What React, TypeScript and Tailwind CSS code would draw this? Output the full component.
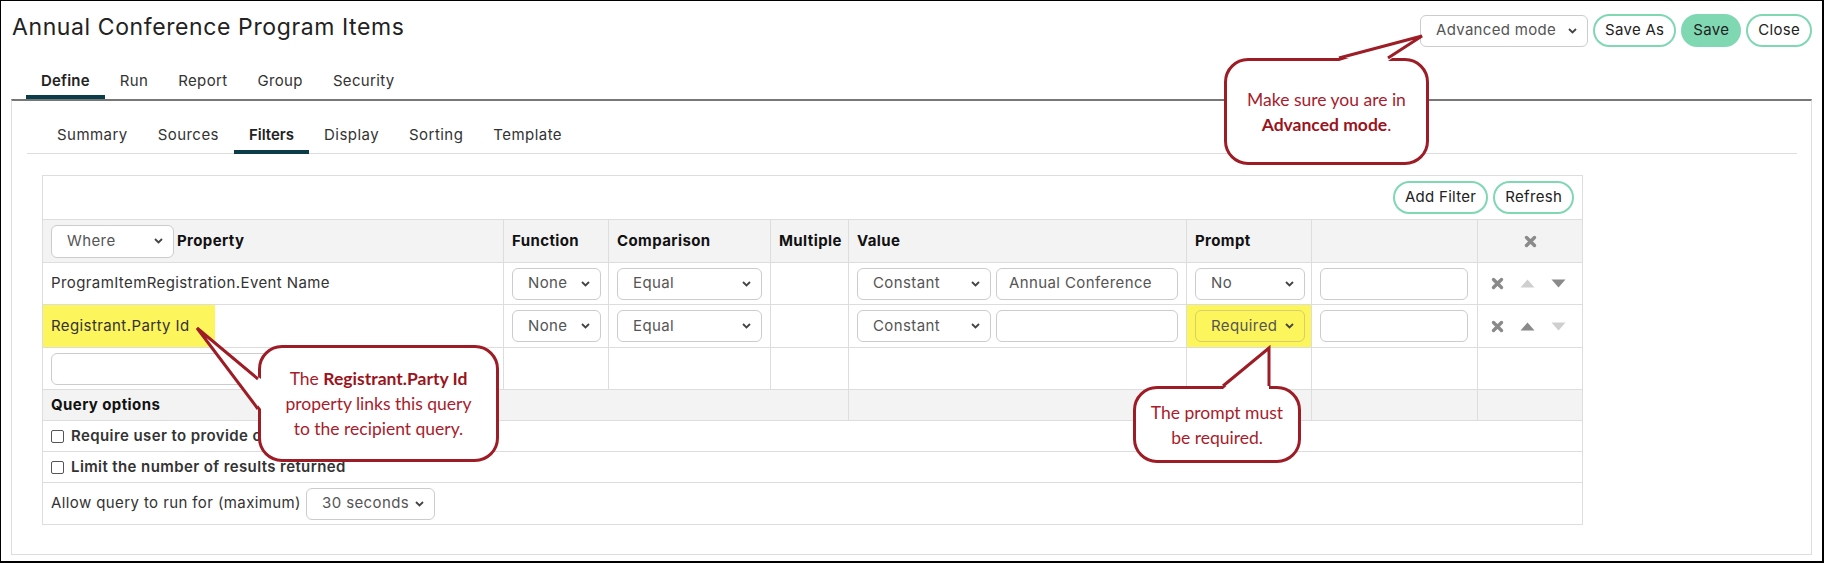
import type { ReactNode } from "react";

const mainTabs = ["Define", "Run", "Report", "Group", "Security"];
const subTabs = ["Summary", "Sources", "Filters", "Display", "Sorting", "Template"];

function Chevron() {
  return (
    <svg width="9" height="6" viewBox="0 0 9 6" className="shrink-0">
      <polyline points="1,1 4.5,4.5 8,1" fill="none" stroke="#444" strokeWidth="1.8" />
    </svg>
  );
}

function Select({ value, className }: { value: string; className: string }) {
  return (
    <div
      className={`flex items-center justify-between rounded-[6px] border border-[#ccc] pl-[15px] pr-[10px] text-[#555] ${className}`}
    >
      <span>{value}</span>
      <Chevron />
    </div>
  );
}

function Input({ value, className }: { value?: string; className: string }) {
  return (
    <div className={`flex items-center rounded-[6px] border border-[#ccc] bg-white pl-[12px] text-[#555] ${className}`}>
      {value}
    </div>
  );
}

function Pill({ label, filled }: { label: string; filled?: boolean }) {
  return (
    <button
      className={`h-[33px] rounded-full border-2 border-[#7fd8b2] px-[10px] text-[15px] tracking-[0.3px] text-[#222] ${
        filled ? "bg-[#7fd8b2]" : "bg-white"
      }`}
    >
      {label}
    </button>
  );
}

function RemoveIcon() {
  return (
    <svg width="13" height="13" viewBox="0 0 13 13">
      <path d="M2.5 2.5 L10.5 10.5 M10.5 2.5 L2.5 10.5" stroke="#8a8a8a" strokeWidth="3.4" strokeLinecap="round" />
    </svg>
  );
}

function Arrow({ up, active }: { up?: boolean; active?: boolean }) {
  return (
    <svg width="15" height="9" viewBox="0 0 15 9">
      <polygon points={up ? "7.5,0.5 14.5,8.5 0.5,8.5" : "0.5,0.5 14.5,0.5 7.5,8.5"} fill={active ? "#8a8a8a" : "#cfcfcf"} />
    </svg>
  );
}

function RowActions({ upActive, downActive }: { upActive?: boolean; downActive?: boolean }) {
  return (
    <div className="flex items-center gap-[16px] pl-[13px]">
      <RemoveIcon />
      <Arrow up active={upActive} />
      <Arrow active={downActive} />
    </div>
  );
}

function Checkbox() {
  return <span className="inline-block h-[13px] w-[13px] shrink-0 rounded-[2px] border border-[#555] bg-white" />;
}

type Pt = [number, number];

// speech bubble: rounded box plus a wedge pointing at the annotated control
function Bubble({
  x,
  y,
  w,
  h,
  base,
  tip,
  children,
}: {
  x: number;
  y: number;
  w: number;
  h: number;
  base: [Pt, Pt];
  tip: Pt;
  children: ReactNode;
}) {
  const left = Math.min(x, tip[0]) - 4;
  const top = Math.min(y, tip[1]) - 4;
  const sw = Math.max(x + w, tip[0]) - left + 4;
  const sh = Math.max(y + h, tip[1]) - top + 4;
  const [b1, b2] = base;
  const horizontal = b1[1] === b2[1];
  const inset = (p: Pt): Pt => (horizontal ? [p[0], p[1] + 3] : [p[0] + 3, p[1]]);
  const pts = (list: Pt[]) => list.map((p) => `${p[0] - left},${p[1] - top}`).join(" ");
  return (
    <>
      <div
        className="absolute flex items-center justify-center rounded-[24px] border-[3px] border-[#9d1c26] bg-white text-center font-['Lato',sans-serif] text-[17.5px] leading-[25px] text-[#a81c2c]"
        style={{ left: x, top: y, width: w, height: h }}
      >
        <div>{children}</div>
      </div>
      <svg className="pointer-events-none absolute" style={{ left, top }} width={sw} height={sh}>
        <polygon points={pts([inset(b1), tip, inset(b2)])} fill="white" />
        <polyline points={pts([b1, tip, b2])} fill="none" stroke="#9d1c26" strokeWidth="3" strokeLinejoin="miter" />
      </svg>
    </>
  );
}

const cell = "border border-[#ddd] px-[8px]";
const bare = "border border-[#ddd]";

export default function App() {
  return (
    <div className="relative flex h-[563px] w-[1824px] flex-col overflow-hidden border-t border-l border-r-2 border-b-2 border-black bg-white font-['Inter',sans-serif] text-[#222]">
      <header className="flex items-start justify-between pl-[11px] pr-[10px] pt-[13px]">
        <h1 className="-mt-[2px] text-[23px] leading-[30px] tracking-[0.6px] text-[#222]">
          Annual Conference Program Items
        </h1>
        <div className="flex items-center gap-[5px]">
          <Select value="Advanced mode" className="h-[32px] w-[168px] text-[15px] tracking-[0.3px]" />
          <Pill label="Save As" />
          <Pill label="Save" filled />
          <Pill label="Close" />
        </div>
      </header>

      <nav className="ml-[25px] mt-[24px] flex">
        {mainTabs.map((t) => (
          <div
            key={t}
            className={`border-b-4 px-[15px] pb-[4px] text-[15px] leading-[20px] ${
              t === "Define"
                ? "border-[#0b3c49] font-semibold tracking-[0.2px] text-[#222]"
                : "border-transparent tracking-[0.35px] text-[#333]"
            }`}
          >
            {t}
          </div>
        ))}
      </nav>

      <section className="mb-[6px] ml-[10px] mr-[10px] flex-1 border-x border-b border-t-2 border-[#ddd] border-t-[#777]">
        <div className="ml-[15px] mr-[14px] flex border-b border-[#ddd] pl-[15px]">
          {subTabs.map((t) => (
            <div
              key={t}
              className={`-mb-px border-b-4 px-[15px] pb-[5px] pt-[24px] text-[15px] leading-[20px] ${
                t === "Filters"
                  ? "border-[#0b3c49] font-semibold tracking-[0px] text-[#222]"
                  : "border-transparent tracking-[0.45px] text-[#333]"
              }`}
            >
              {t}
            </div>
          ))}
        </div>

        <table className="ml-[30px] mt-[21px] w-[1540px] table-fixed border-collapse text-[15px] tracking-[0.4px]">
          <colgroup>
            <col className="w-[461px]" />
            <col className="w-[105px]" />
            <col className="w-[162px]" />
            <col className="w-[78px]" />
            <col className="w-[338px]" />
            <col className="w-[125px]" />
            <col className="w-[166px]" />
            <col className="w-[105px]" />
          </colgroup>
          <tbody>
            <tr className="h-[44px]">
              <td colSpan={8} className={cell}>
                <div className="flex justify-end gap-[5px]">
                  <Pill label="Add Filter" />
                  <Pill label="Refresh" />
                </div>
              </td>
            </tr>
            <tr className="h-[43px] bg-[#f3f3f3] text-left font-bold text-[#111]">
              <td className={cell}>
                <div className="flex items-center gap-[3px]">
                  <Select value="Where" className="h-[33px] w-[123px] bg-white font-normal" />
                  <span>Property</span>
                </div>
              </td>
              <td className={cell}>Function</td>
              <td className={cell}>Comparison</td>
              <td className={cell}>Multiple</td>
              <td className={cell}>Value</td>
              <td className={cell}>Prompt</td>
              <td className={cell}></td>
              <td className={bare}>
                <div className="flex justify-center">
                  <RemoveIcon />
                </div>
              </td>
            </tr>
            <tr className="h-[42px] text-[#333]">
              <td className={cell}>ProgramItemRegistration.Event Name</td>
              <td className={cell}>
                <Select value="None" className="h-[32px] w-[89px] bg-white" />
              </td>
              <td className={cell}>
                <Select value="Equal" className="h-[32px] w-[145px] bg-white" />
              </td>
              <td className={cell}></td>
              <td className={cell}>
                <div className="flex gap-[5px]">
                  <Select value="Constant" className="h-[32px] w-[134px] bg-white" />
                  <Input value="Annual Conference" className="h-[32px] w-[182px]" />
                </div>
              </td>
              <td className={cell}>
                <Select value="No" className="h-[32px] w-[110px] bg-white" />
              </td>
              <td className={cell}>
                <Input className="h-[32px] w-[148px]" />
              </td>
              <td className={bare}>
                <RowActions downActive />
              </td>
            </tr>
            <tr className="h-[43px] text-[#333]">
              <td className={bare}>
                <div className="flex h-[42px] w-[172px] items-center bg-[#fdf55c] px-[8px]">Registrant.Party Id</div>
              </td>
              <td className={cell}>
                <Select value="None" className="h-[32px] w-[89px] bg-white" />
              </td>
              <td className={cell}>
                <Select value="Equal" className="h-[32px] w-[145px] bg-white" />
              </td>
              <td className={cell}></td>
              <td className={cell}>
                <div className="flex gap-[5px]">
                  <Select value="Constant" className="h-[32px] w-[134px] bg-white" />
                  <Input className="h-[32px] w-[182px]" />
                </div>
              </td>
              <td className={`${cell} bg-[#fdf55c]`}>
                <Select value="Required" className="h-[32px] w-[110px] border-[#d6cf6a] bg-[#fdf55c]" />
              </td>
              <td className={cell}>
                <Input className="h-[32px] w-[148px]" />
              </td>
              <td className={bare}>
                <RowActions upActive />
              </td>
            </tr>
            <tr className="h-[42px]">
              <td className={cell}>
                <Input className="h-[32px] w-[444px]" />
              </td>
              <td className={cell}></td>
              <td className={cell}></td>
              <td className={cell}></td>
              <td className={cell}></td>
              <td className={cell}></td>
              <td className={cell}></td>
              <td className={cell}></td>
            </tr>
            <tr className="h-[31px] bg-[#f3f3f3] font-bold text-[#111]">
              <td colSpan={4} className={cell}>
                Query options
              </td>
              <td className={cell}></td>
              <td className={cell}></td>
              <td className={cell}></td>
              <td className={cell}></td>
            </tr>
            <tr className="h-[31px] font-semibold text-[#333]">
              <td colSpan={8} className={cell}>
                <label className="flex items-center gap-[7px]">
                  <Checkbox />
                  Require user to provide criteria
                </label>
              </td>
            </tr>
            <tr className="h-[31px] font-semibold text-[#333]">
              <td colSpan={8} className={cell}>
                <label className="flex items-center gap-[7px]">
                  <Checkbox />
                  Limit the number of results returned
                </label>
              </td>
            </tr>
            <tr className="h-[42px]">
              <td colSpan={8} className={cell}>
                <div className="flex items-center gap-[5px] text-[#333]">
                  <span>Allow query to run for (maximum)</span>
                  <Select value="30 seconds" className="h-[32px] w-[129px] bg-white" />
                </div>
              </td>
            </tr>
          </tbody>
        </table>
      </section>

      <Bubble x={1223} y={57} w={205} h={107} base={[[1338, 57], [1387, 57]]} tip={[1421, 35]}>
        Make sure you are in
        <br />
        <b className="text-[#9a1420]">Advanced mode</b>.
      </Bubble>
      <Bubble x={257} y={344} w={241} h={117} base={[[257, 378], [257, 408]]} tip={[196, 327]}>
        The <b className="text-[#9a1420]">Registrant.Party Id</b>
        <br />
        property links this query
        <br />
        to the recipient query.
      </Bubble>
      <Bubble x={1132} y={385} w={168} h={77} base={[[1222, 385], [1268, 385]]} tip={[1268, 347]}>
        The prompt must
        <br />
        be required.
      </Bubble>
    </div>
  );
}
